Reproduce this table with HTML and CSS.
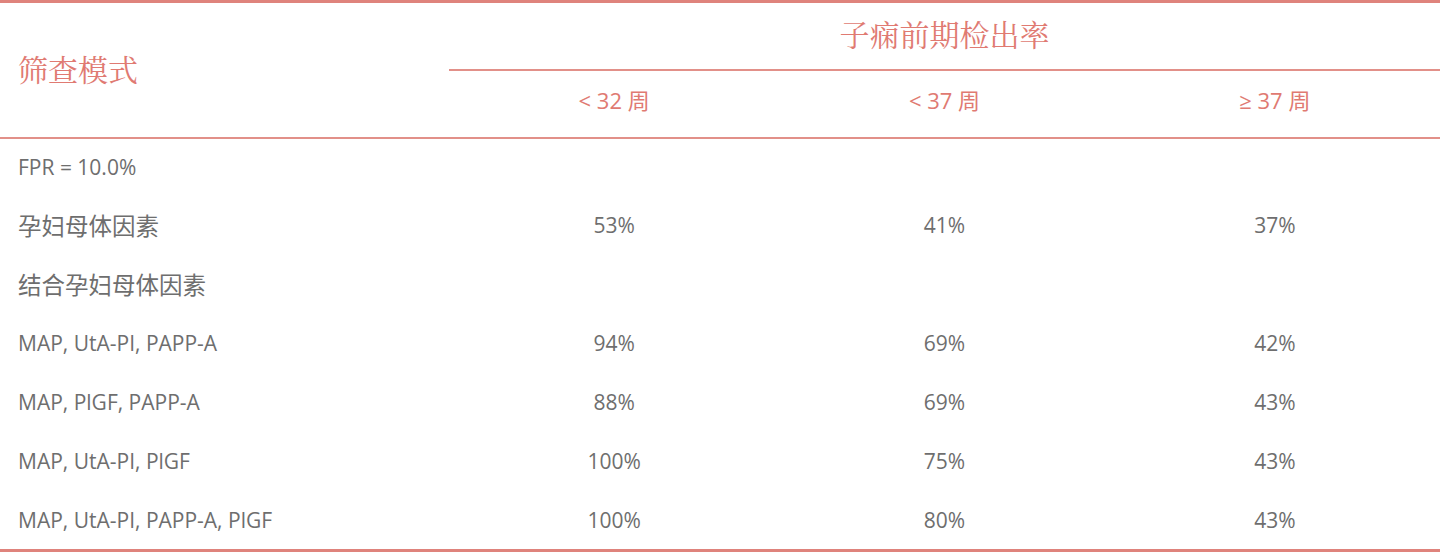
FILE: index.html
```html
<!DOCTYPE html>
<html lang="zh">
<head>
<meta charset="utf-8">
<link rel="stylesheet" href="styles.css">
</head>
<body>
<table class="tbl">
  <colgroup>
    <col class="c-mode">
    <col class="c-val">
    <col class="c-val">
    <col class="c-val">
  </colgroup>
  <thead>
    <tr class="h1">
      <th class="mode" rowspan="2">筛查模式</th>
      <th class="group" colspan="3">子痫前期检出率</th>
    </tr>
    <tr class="h2">
      <th class="sub">&lt; 32 周</th>
      <th class="sub">&lt; 37 周</th>
      <th class="sub">≥ 37 周</th>
    </tr>
  </thead>
  <tbody>
    <tr><td class="lbl">FPR = 10.0%</td><td></td><td></td><td></td></tr>
    <tr><td class="lbl cjk">孕妇母体因素</td><td>53%</td><td>41%</td><td>37%</td></tr>
    <tr><td class="lbl cjk">结合孕妇母体因素</td><td></td><td></td><td></td></tr>
    <tr><td class="lbl">MAP, UtA-PI, PAPP-A</td><td>94%</td><td>69%</td><td>42%</td></tr>
    <tr><td class="lbl">MAP, PlGF, PAPP-A</td><td>88%</td><td>69%</td><td>43%</td></tr>
    <tr><td class="lbl">MAP, UtA-PI, PlGF</td><td>100%</td><td>75%</td><td>43%</td></tr>
    <tr><td class="lbl">MAP, UtA-PI, PAPP-A, PlGF</td><td>100%</td><td>80%</td><td>43%</td></tr>
  </tbody>
</table>
</body>
</html>
```

FILE: styles.css
```css
html, body {
  margin: 0;
  padding: 0;
  background: #ffffff;
}
.tbl {
  width: 1440px;
  border-collapse: collapse;
  table-layout: fixed;
  font-family: "Open Sans", "Noto Sans CJK SC", sans-serif;
  color: #6e6e6e;
  border-top: 3px solid #df837c;
  border-bottom: 3px solid #df837c;
  line-height: 1.2;
}
.c-mode { width: 449px; }
.tbl th {
  font-weight: normal;
  color: #e07a72;
  padding: 0;
  box-sizing: border-box;
}
.mode {
  text-align: left;
  padding-left: 18px !important;
  font-family: "Noto Serif CJK SC", "Noto Sans CJK SC", serif;
  font-size: 30px;
  border-bottom: 2px solid #e29089;
  padding-bottom: 4px !important;
}
.h1 { height: 68px; }
.group {
  font-family: "Noto Serif CJK SC", "Noto Sans CJK SC", serif;
  font-size: 30px;
  border-bottom: 2px solid #e29089;
  vertical-align: middle;
  padding-bottom: 6px !important;
}
.h2 { height: 68px; }
.sub {
  font-size: 22px;
  border-bottom: 2px solid #e29089;
  vertical-align: middle;
  padding-bottom: 7px !important;
}
.tbl tbody tr { height: 59px; }
.tbl td {
  padding: 0;
  text-align: center;
  vertical-align: middle;
  font-size: 21px;
}
.tbl td.lbl {
  text-align: left;
  padding-left: 18px;
}
.tbl td.cjk {
  font-size: 23.5px;
}
```
